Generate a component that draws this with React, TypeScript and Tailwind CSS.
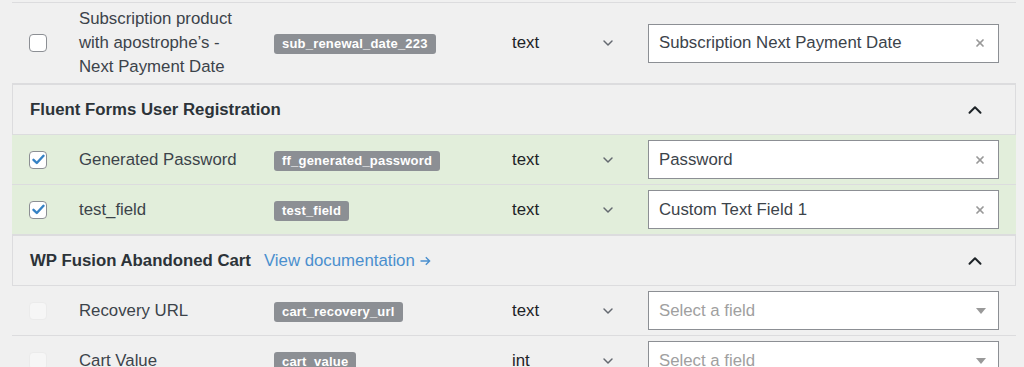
import { ChevronDown, ChevronUp, X } from "lucide-react";

type Field = {
  label: string;
  fieldKey: string;
  type: string;
  value?: string;
  checked?: boolean;
  disabled?: boolean;
};

function Checkbox({ checked, disabled }: { checked?: boolean; disabled?: boolean }) {
  if (disabled) {
    return <div className="w-[18px] h-[18px] rounded-[4px] border border-[#ebebeb] bg-[#f6f6f6] shrink-0" />;
  }
  return (
    <div className="w-[18px] h-[18px] rounded-[4px] border border-[#8c8f94] bg-white flex items-center justify-center shrink-0">
      {checked && (
        <svg width="13" height="11" viewBox="0 0 13 11">
          <path d="M1.5 5.8 L4.8 9 L11.5 1.8" fill="none" stroke="#3582c4" strokeWidth="2.4" strokeLinecap="round" strokeLinejoin="round" />
        </svg>
      )}
    </div>
  );
}

function FieldRow({ field, green }: { field: Field; green?: boolean }) {
  return (
    <div
      className={`flex items-center border-b border-[#dcdcde] pl-[17px] min-h-[50px] ${
        green ? "bg-[#e2eedb]" : ""
      }`}
    >
      <Checkbox checked={field.checked} disabled={field.disabled} />
      <div className="ml-[32px] w-[195px] pr-[26px] py-[4px] text-[16.8px] leading-[24px] text-[#3c434a]">
        {field.label}
      </div>
      <div className="w-[238px]">
        <span className="inline-block bg-[#8c8f94] text-white font-bold text-[13px] leading-[20px] px-[8px] rounded-[3px] tracking-[0.2px]">
          {field.fieldKey}
        </span>
      </div>
      <div className="w-[88px] text-[16.8px] text-[#1d2327]">{field.type}</div>
      <div className="w-[48px]">
        <ChevronDown size={16} strokeWidth={2.2} className="text-[#646970]" />
      </div>
      <div className="w-[351px] h-[39px] bg-white border border-[#8c8f94] flex items-center justify-between pl-[10px] pr-[12px]">
        {field.value ? (
          <>
            <span className="text-[16.8px] text-[#3c434a]">{field.value}</span>
            <X size={12} strokeWidth={3.5} className="text-[#999999]" />
          </>
        ) : (
          <>
            <span className="text-[16.8px] text-[#a0a0a0]">Select a field</span>
            <svg width="10" height="6" viewBox="0 0 10 6">
              <path d="M0 0 H10 L5 6 Z" fill="#999999" />
            </svg>
          </>
        )}
      </div>
    </div>
  );
}

function SectionHeader({ title, docs }: { title: string; docs?: boolean }) {
  return (
    <div className="flex items-center justify-between h-[51px] border border-[#dcdcde] bg-[#f0f0f0] pl-[17px] pr-[29px]">
      <div className="flex items-center gap-[13px] text-[16.8px]">
        <span className="font-bold text-[#2c3338]">{title}</span>
        {docs && (
          <span className="text-[#4a8fce] flex items-center gap-[5px]">
            View documentation
            <svg width="11" height="10" viewBox="0 0 11 10">
              <path d="M0.5 5 H9.5 M5.8 1.2 L9.6 5 L5.8 8.8" fill="none" stroke="#4a8fce" strokeWidth="1.4" />
            </svg>
          </span>
        )}
      </div>
      <ChevronUp size={22} strokeWidth={2.2} className="text-[#1d2327]" />
    </div>
  );
}

export default function App() {
  const fluent: Field[] = [
    { label: "Generated Password", fieldKey: "ff_generated_password", type: "text", value: "Password", checked: true },
    { label: "test_field", fieldKey: "test_field", type: "text", value: "Custom Text Field 1", checked: true },
  ];
  const cart: Field[] = [
    { label: "Recovery URL", fieldKey: "cart_recovery_url", type: "text", disabled: true },
    { label: "Cart Value", fieldKey: "cart_value", type: "int", disabled: true },
  ];

  return (
    <div
      className="w-[1024px] h-[367px] overflow-hidden bg-[#f0f0f0] pt-[2px]"
      style={{ fontFamily: '"Liberation Sans", Arial, sans-serif' }}
    >
      <div className="ml-[12px] w-[1004px]">
        <div className="border-t border-[#dcdcde]">
          <FieldRow
            field={{
              label: "Subscription product with apostrophe’s - Next Payment Date",
              fieldKey: "sub_renewal_date_223",
              type: "text",
              value: "Subscription Next Payment Date",
            }}
          />
        </div>
        <SectionHeader title="Fluent Forms User Registration" />
        {fluent.map((f) => (
          <FieldRow key={f.fieldKey} field={f} green />
        ))}
        <SectionHeader title="WP Fusion Abandoned Cart" docs />
        {cart.map((f) => (
          <FieldRow key={f.fieldKey} field={f} />
        ))}
      </div>
    </div>
  );
}
